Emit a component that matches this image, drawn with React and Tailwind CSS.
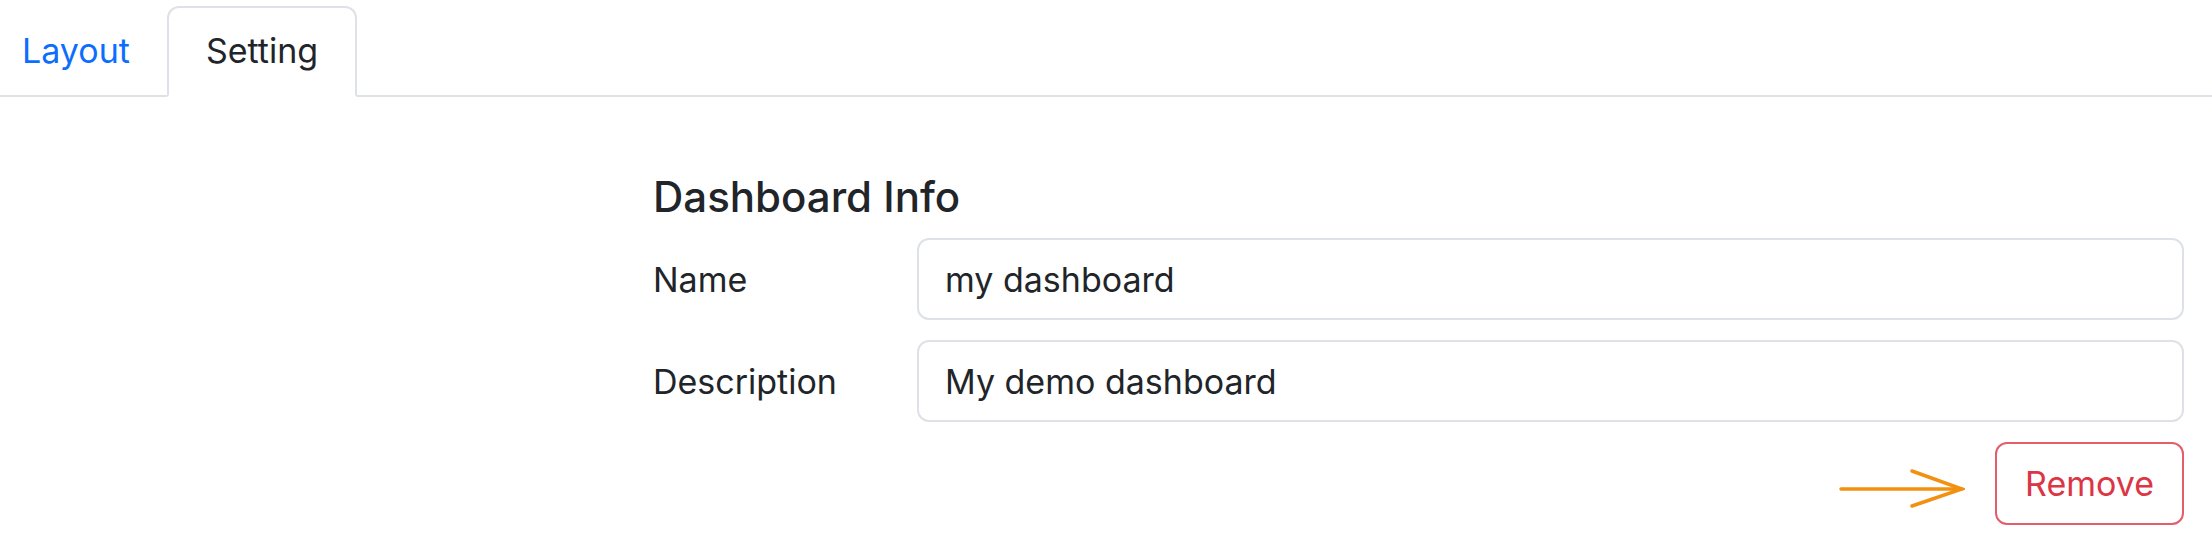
import React, { useState } from "react";

export default function App() {
  const [tab, setTab] = useState("setting");
  const [name, setName] = useState("my dashboard");
  const [desc, setDesc] = useState("My demo dashboard");

  return (
    <div className="w-[2212px] h-[554px] bg-white text-[#212529] font-['Inter','Liberation_Sans',sans-serif]">
      {/* tabs */}
      <div className="flex pt-[6px] border-b-2 border-[#dee2e6]">
        <button
          onClick={() => setTab("layout")}
          className="pl-[20px] pr-[35px] pt-[17px] pb-[19px] text-[34px] leading-[1.5] text-[#0d6efd] border-2 border-transparent -mb-[2px]"
        >
          Layout
        </button>
        <button
          onClick={() => setTab("setting")}
          className="px-[37px] pt-[17px] pb-[19px] text-[34px] leading-[1.5] text-[#212529] bg-white border-2 border-[#dee2e6] border-b-white rounded-t-[12px] -mb-[2px]"
        >
          Setting
        </button>
      </div>

      <div className="ml-[653px] mr-[28px] pt-[75px]">
        <h5 className="text-[42px] leading-[1.2] font-medium mb-[16px]">Dashboard Info</h5>

        <div className="flex flex-col gap-[20px]">
          <div className="flex items-center">
            <label className="w-[264px] text-[34px]">Name</label>
            <input
              value={name}
              onChange={(e) => setName(e.target.value)}
              className="flex-1 h-[82px] px-[26px] text-[34px] border-2 border-[#dee2e6] rounded-[12px] outline-none"
            />
          </div>
          <div className="flex items-center">
            <label className="w-[264px] text-[34px]">Description</label>
            <input
              value={desc}
              onChange={(e) => setDesc(e.target.value)}
              className="flex-1 h-[82px] px-[26px] text-[34px] border-2 border-[#dee2e6] rounded-[12px] outline-none"
            />
          </div>
        </div>

        <div className="flex justify-end items-center gap-[30px] mt-[19px]">
          <svg width="126" height="84" viewBox="0 0 126 84" fill="none" stroke="#f29111" strokeWidth="3.5" strokeLinecap="round">
            <path d="M2 48 H123" />
            <path d="M73 30 L123 48 L73 65" />
          </svg>
          <button className="h-[83px] w-[189px] text-[34px] text-[#dc3545] border-2 border-[#e35d6a] rounded-[12px]">
            Remove
          </button>
        </div>
      </div>
    </div>
  );
}
